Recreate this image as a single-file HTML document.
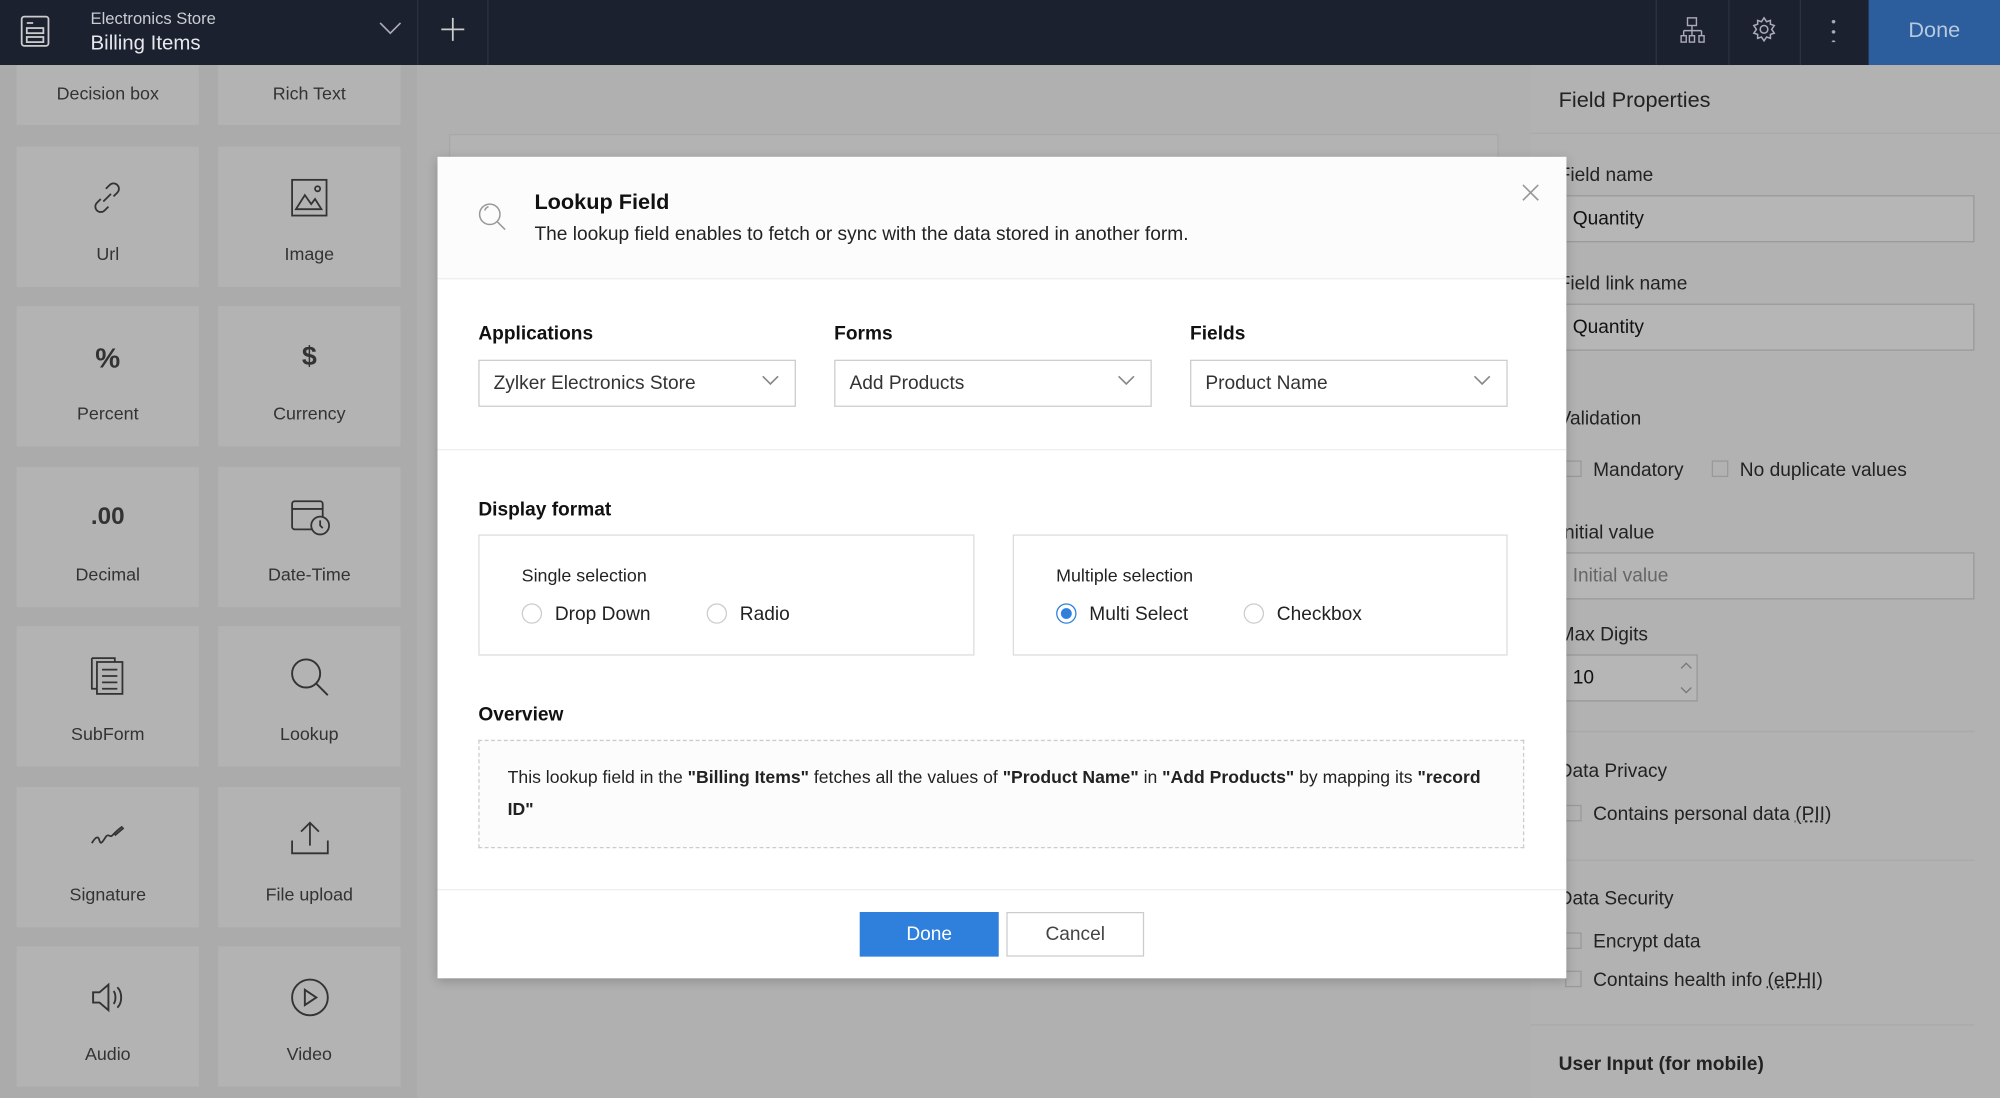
<!DOCTYPE html>
<html><head><meta charset="utf-8"><style>
*{box-sizing:border-box;margin:0;padding:0}
html,body{width:2000px;height:1098px;overflow:hidden;background:#adadad}
#s{position:absolute;left:0;top:0;width:1568px;height:861px;transform:scale(1.27551);transform-origin:0 0;font-family:"Liberation Sans",sans-serif;color:#222}
.a{position:absolute}
.top{left:0;top:0;width:1568px;height:51px;background:#1c2130}
.tile{position:absolute;width:143px;background:#b3b3b3;text-align:center;font-size:14px;color:#333}
.tile .l{position:absolute;left:0;right:0}
.lbl{font-size:15px;font-weight:600;color:#111}
.sel{position:absolute;height:37px;border:1px solid #ccc;background:#fff;font-size:15px;padding:9px 11px;color:#333}
.chev{position:absolute;right:12px;top:11px}
.rad{display:inline-block;width:16px;height:16px;border:1px solid #ccc;border-radius:50%;vertical-align:-3px;margin-right:10px}
.rp{font-size:15px;color:#222}
.in{position:absolute;left:1222px;width:326px;height:37px;border:1px solid #999;background:#b6b6b6;font-size:15px;padding:9px 10px;color:#111}
.cb{display:inline-block;width:13px;height:13px;border:1px solid #999;margin-right:9px;vertical-align:-1px}
</style></head><body><div id="s">
<div class="a top"></div>
<svg class="a" style="left:16px;top:12px" width="24" height="26" viewBox="0 0 24 26" fill="none" stroke="#ccc" stroke-width="1.4"><rect x="1" y="1" width="21" height="23" rx="2"/><line x1="5" y1="6" x2="10" y2="6"/><rect x="5" y="10" width="13" height="4"/><rect x="5" y="17" width="13" height="4"/></svg>
<div class="a" style="left:71px;top:7px;font-size:13px;color:#c9ccd3">Electronics Store</div>
<div class="a" style="left:71px;top:26px;font-size:16px;color:#e6e8ec">Billing Items</div>
<svg class="a" style="left:297px;top:16px" width="18" height="12" fill="none" stroke="#aab" stroke-width="1.3"><path d="M1 2l8 8 8-8"/></svg>
<div class="a" style="left:327px;top:0;width:1px;height:51px;background:#2c3242"></div>
<svg class="a" style="left:345px;top:13px" width="20" height="20" stroke="#ccc" stroke-width="1.4"><path d="M10 1v18M1 10h18"/></svg>
<div class="a" style="left:382px;top:0;width:1px;height:51px;background:#2c3242"></div>
<div class="a" style="left:1298px;top:0;width:1px;height:51px;background:#2c3242"></div>
<div class="a" style="left:1355px;top:0;width:1px;height:51px;background:#2c3242"></div>
<div class="a" style="left:1411px;top:0;width:1px;height:51px;background:#2c3242"></div>
<svg class="a" style="left:1317px;top:13px" width="20" height="22" fill="none" stroke="#aab" stroke-width="1.1"><rect x="6" y="1" width="7" height="6"/><path d="M9.5 7v4M3 11h14M3 11v4M9.5 11v4M17 11v4"/><rect x="1" y="15" width="4" height="5"/><rect x="7.5" y="15" width="4" height="5"/><rect x="15" y="15" width="4" height="5"/></svg>
<svg class="a" style="left:1373px;top:13px" width="20" height="20" fill="none" stroke="#aab" stroke-width="1.2"><circle cx="10" cy="10" r="3"/><path d="M10 1l2 3 3-1 0 3 3 1-2 3 2 3-3 1 0 3-3-1-2 3-2-3-3 1 0-3-3-1 2-3-2-3 3-1 0-3 3 1z"/></svg>
<div class="a" style="left:1436px;top:13px;width:3px;height:20px;background:radial-gradient(circle,#aab 1.3px,transparent 1.5px) 0 0/3px 8px"></div>
<div class="a" style="left:1465px;top:0;width:103px;height:51px;background:#2c5d9c;color:#b7c9e0;font-size:17px;text-align:center;line-height:47px">Done</div>

<div class="a" style="left:0;top:51px;width:327px;height:810px;background:#ababab"></div>
<div class="tile" style="left:13px;top:51px;height:47px;line-height:44px">Decision box</div>
<div class="tile" style="left:171px;top:51px;height:47px;line-height:44px">Rich Text</div>
<div class="tile" style="left:13px;top:115px;height:110px"><svg class="a" style="left:56px;top:25px" width="30" height="30" fill="none" stroke="#333" stroke-width="1.4"><path d="M12 18l6-6M14 8l3-3a4 4 0 016 6l-3 3M16 22l-3 3a4 4 0 01-6-6l3-3"/></svg><div class="l" style="top:76px">Url</div></div>
<div class="tile" style="left:171px;top:115px;height:110px"><svg class="a" style="left:56px;top:24px" width="32" height="32" fill="none" stroke="#333" stroke-width="1.4"><rect x="2" y="2" width="27" height="28"/><path d="M5 25l7-11 5 7 3-4 5 8zM5 25h20"/><circle cx="22" cy="9" r="2"/></svg><div class="l" style="top:76px">Image</div></div>
<div class="tile" style="left:13px;top:240px;height:110px"><div class="l" style="top:28px;font-size:22px;font-weight:bold;color:#333">%</div><div class="l" style="top:76px">Percent</div></div>
<div class="tile" style="left:171px;top:240px;height:110px"><div class="l" style="top:28px;font-size:21px;font-weight:bold;color:#333">$</div><div class="l" style="top:76px">Currency</div></div>
<div class="tile" style="left:13px;top:366px;height:110px"><div class="l" style="top:29px;font-size:19px;font-weight:bold;color:#333">.00</div><div class="l" style="top:76px">Decimal</div></div>
<div class="tile" style="left:171px;top:366px;height:110px"><svg class="a" style="left:56px;top:24px" width="34" height="32" fill="none" stroke="#333" stroke-width="1.4"><rect x="2" y="3" width="24" height="22" rx="2"/><path d="M2 9h24"/><circle cx="24" cy="22" r="7" fill="#b3b3b3"/><path d="M24 18v4l2 2"/></svg><div class="l" style="top:76px">Date-Time</div></div>
<div class="tile" style="left:13px;top:491px;height:110px"><svg class="a" style="left:57px;top:24px" width="30" height="32" fill="none" stroke="#333" stroke-width="1.4"><rect x="6" y="4" width="20" height="25"/><path d="M2 1h18v3M2 1v24h4M10 10h12M10 15h12M10 20h12M10 25h12"/></svg><div class="l" style="top:76px">SubForm</div></div>
<div class="tile" style="left:171px;top:491px;height:110px"><svg class="a" style="left:56px;top:24px" width="32" height="32" fill="none" stroke="#333" stroke-width="1.5"><circle cx="13" cy="13" r="11"/><path d="M21 21l9 9"/></svg><div class="l" style="top:76px">Lookup</div></div>
<div class="tile" style="left:13px;top:617px;height:110px"><svg class="a" style="left:57px;top:30px" width="30" height="18" fill="none" stroke="#333" stroke-width="1.4"><path d="M2 14c3-5 5-6 6-2s3 0 5-3 3 1 5-1 5-5 8-7M20 8l7-6"/></svg><div class="l" style="top:76px">Signature</div></div>
<div class="tile" style="left:171px;top:617px;height:110px"><svg class="a" style="left:56px;top:26px" width="32" height="28" fill="none" stroke="#333" stroke-width="1.4"><path d="M16 20V3M9 9l7-7 7 7M2 16v10h28V16"/></svg><div class="l" style="top:76px">File upload</div></div>
<div class="tile" style="left:13px;top:742px;height:110px"><svg class="a" style="left:58px;top:28px" width="28" height="24" fill="none" stroke="#333" stroke-width="1.5"><path d="M2 8h5l7-6v20l-7-6H2zM18 7c2 2 2 8 0 10M21 4c4 4 4 12 0 16"/></svg><div class="l" style="top:76px">Audio</div></div>
<div class="tile" style="left:171px;top:742px;height:110px"><svg class="a" style="left:56px;top:24px" width="32" height="32" fill="none" stroke="#333" stroke-width="1.5"><circle cx="16" cy="16" r="14"/><path d="M12 10l9 6-9 6z"/></svg><div class="l" style="top:76px">Video</div></div>

<div class="a" style="left:327px;top:51px;width:873px;height:810px;background:#b0b0b0"></div>
<div class="a" style="left:352px;top:105px;width:823px;height:30px;border:1px solid #a8a8a8;background:#b3b3b3"></div>
<div class="a" style="left:1200px;top:51px;width:368px;height:810px;background:#b2b2b2"></div>
<div class="a" style="left:1222px;top:69px;font-size:17px;color:#222">Field Properties</div>
<div class="a" style="left:1200px;top:104px;width:368px;height:1px;background:#a9a9a9"></div>
<div class="a rp" style="left:1222px;top:129px">Field name</div>
<div class="in" style="top:153px">Quantity</div>
<div class="a rp" style="left:1222px;top:214px">Field link name</div>
<div class="in" style="top:238px">Quantity</div>
<div class="a rp" style="left:1222px;top:320px">Validation</div>
<div class="a rp" style="left:1227px;top:360px"><span class="cb"></span>Mandatory</div>
<div class="a rp" style="left:1342px;top:360px"><span class="cb"></span>No duplicate values</div>
<div class="a rp" style="left:1222px;top:409px">Initial value</div>
<div class="in" style="top:433px;color:#666">Initial value</div>
<div class="a rp" style="left:1222px;top:489px">Max Digits</div>
<div class="in" style="top:513px;width:109px">10</div>
<svg class="a" style="left:1316px;top:517px" width="12" height="30" fill="none" stroke="#777" stroke-width="1"><path d="M2 7l4-4 4 4M2 22l4 4 4-4"/></svg>
<div class="a" style="left:1200px;top:573px;width:348px;height:1px;background:#a9a9a9"></div>
<div class="a rp" style="left:1222px;top:596px">Data Privacy</div>
<div class="a rp" style="left:1227px;top:630px"><span class="cb"></span>Contains personal data <u style="text-decoration-style:dotted">(PII)</u></div>
<div class="a" style="left:1200px;top:674px;width:348px;height:1px;background:#a9a9a9"></div>
<div class="a rp" style="left:1222px;top:696px">Data Security</div>
<div class="a rp" style="left:1227px;top:730px"><span class="cb"></span>Encrypt data</div>
<div class="a rp" style="left:1227px;top:760px"><span class="cb"></span>Contains health info <u style="text-decoration-style:dotted">(ePHI)</u></div>
<div class="a" style="left:1200px;top:803px;width:348px;height:1px;background:#a9a9a9"></div>
<div class="a rp" style="left:1222px;top:826px;font-weight:600;color:#222">User Input (for mobile)</div>

<div class="a" style="left:343px;top:123px;width:885px;height:644px;background:#fff;box-shadow:0 2px 8px rgba(0,0,0,.2)">
 <div class="a" style="left:0;top:0;width:885px;height:96px;background:#fcfcfc;border-bottom:1px solid #eee"></div>
 <svg class="a" style="left:31px;top:35px" width="24" height="24" fill="none" stroke="#999" stroke-width="1.2"><circle cx="10" cy="10" r="8"/><path d="M16 16l6 6M6 7a5 5 0 013-3"/></svg>
 <div class="a" style="left:76px;top:26px;font-size:17px;font-weight:600;color:#111">Lookup Field</div>
 <div class="a" style="left:76px;top:52px;font-size:15px;color:#222">The lookup field enables to fetch or sync with the data stored in another form.</div>
 <svg class="a" style="left:850px;top:21px" width="14" height="14" stroke="#999" stroke-width="1.3"><path d="M1 1l12 12M13 1L1 13"/></svg>
 <div class="a lbl" style="left:32px;top:130px">Applications</div>
 <div class="a lbl" style="left:311px;top:130px">Forms</div>
 <div class="a lbl" style="left:590px;top:130px">Fields</div>
 <div class="sel" style="left:32px;top:159px;width:249px">Zylker Electronics Store<svg class="chev" width="14" height="9" fill="none" stroke="#888" stroke-width="1.3"><path d="M1 1l6 6 6-6"/></svg></div>
 <div class="sel" style="left:311px;top:159px;width:249px">Add Products<svg class="chev" width="14" height="9" fill="none" stroke="#888" stroke-width="1.3"><path d="M1 1l6 6 6-6"/></svg></div>
 <div class="sel" style="left:590px;top:159px;width:249px">Product Name<svg class="chev" width="14" height="9" fill="none" stroke="#888" stroke-width="1.3"><path d="M1 1l6 6 6-6"/></svg></div>
 <div class="a" style="left:0;top:229px;width:885px;height:1px;background:#eee"></div>
 <div class="a lbl" style="left:32px;top:268px">Display format</div>
 <div class="a" style="left:32px;top:296px;width:389px;height:95px;border:1px solid #ddd"></div>
 <div class="a" style="left:451px;top:296px;width:388px;height:95px;border:1px solid #ddd"></div>
 <div class="a" style="left:66px;top:320px;font-size:14px;color:#222">Single selection</div>
 <div class="a" style="left:66px;top:350px;font-size:15px;color:#222"><span class="rad"></span>Drop Down</div>
 <div class="a" style="left:211px;top:350px;font-size:15px;color:#222"><span class="rad"></span>Radio</div>
 <div class="a" style="left:485px;top:320px;font-size:14px;color:#222">Multiple selection</div>
 <div class="a" style="left:485px;top:350px;font-size:15px;color:#222"><span class="rad" style="border-color:#2f7fdc;background:radial-gradient(circle,#2f7fdc 4px,#fff 4.5px)"></span>Multi Select</div>
 <div class="a" style="left:632px;top:350px;font-size:15px;color:#222"><span class="rad"></span>Checkbox</div>
 <div class="a lbl" style="left:32px;top:429px">Overview</div>
 <div class="a" style="left:32px;top:457px;width:820px;height:85px;border:1px dashed #ccc;background:#fcfcfc;padding:16px 18px 16px 22px;font-size:13.8px;line-height:25px;color:#222;white-space:nowrap">This lookup field in the <b>"Billing Items"</b> fetches all the values of <b>"Product Name"</b> in <b>"Add Products"</b> by mapping its <b>"record<br>ID"</b></div>
 <div class="a" style="left:0;top:574px;width:885px;height:1px;background:#eee"></div>
 <div class="a" style="left:331px;top:592px;width:109px;height:35px;background:#2f7fdc;color:#fff;font-size:15px;text-align:center;line-height:35px">Done</div>
 <div class="a" style="left:446px;top:592px;width:108px;height:35px;border:1px solid #ccc;color:#444;font-size:15px;text-align:center;line-height:33px">Cancel</div>
</div>
</div></body></html>
